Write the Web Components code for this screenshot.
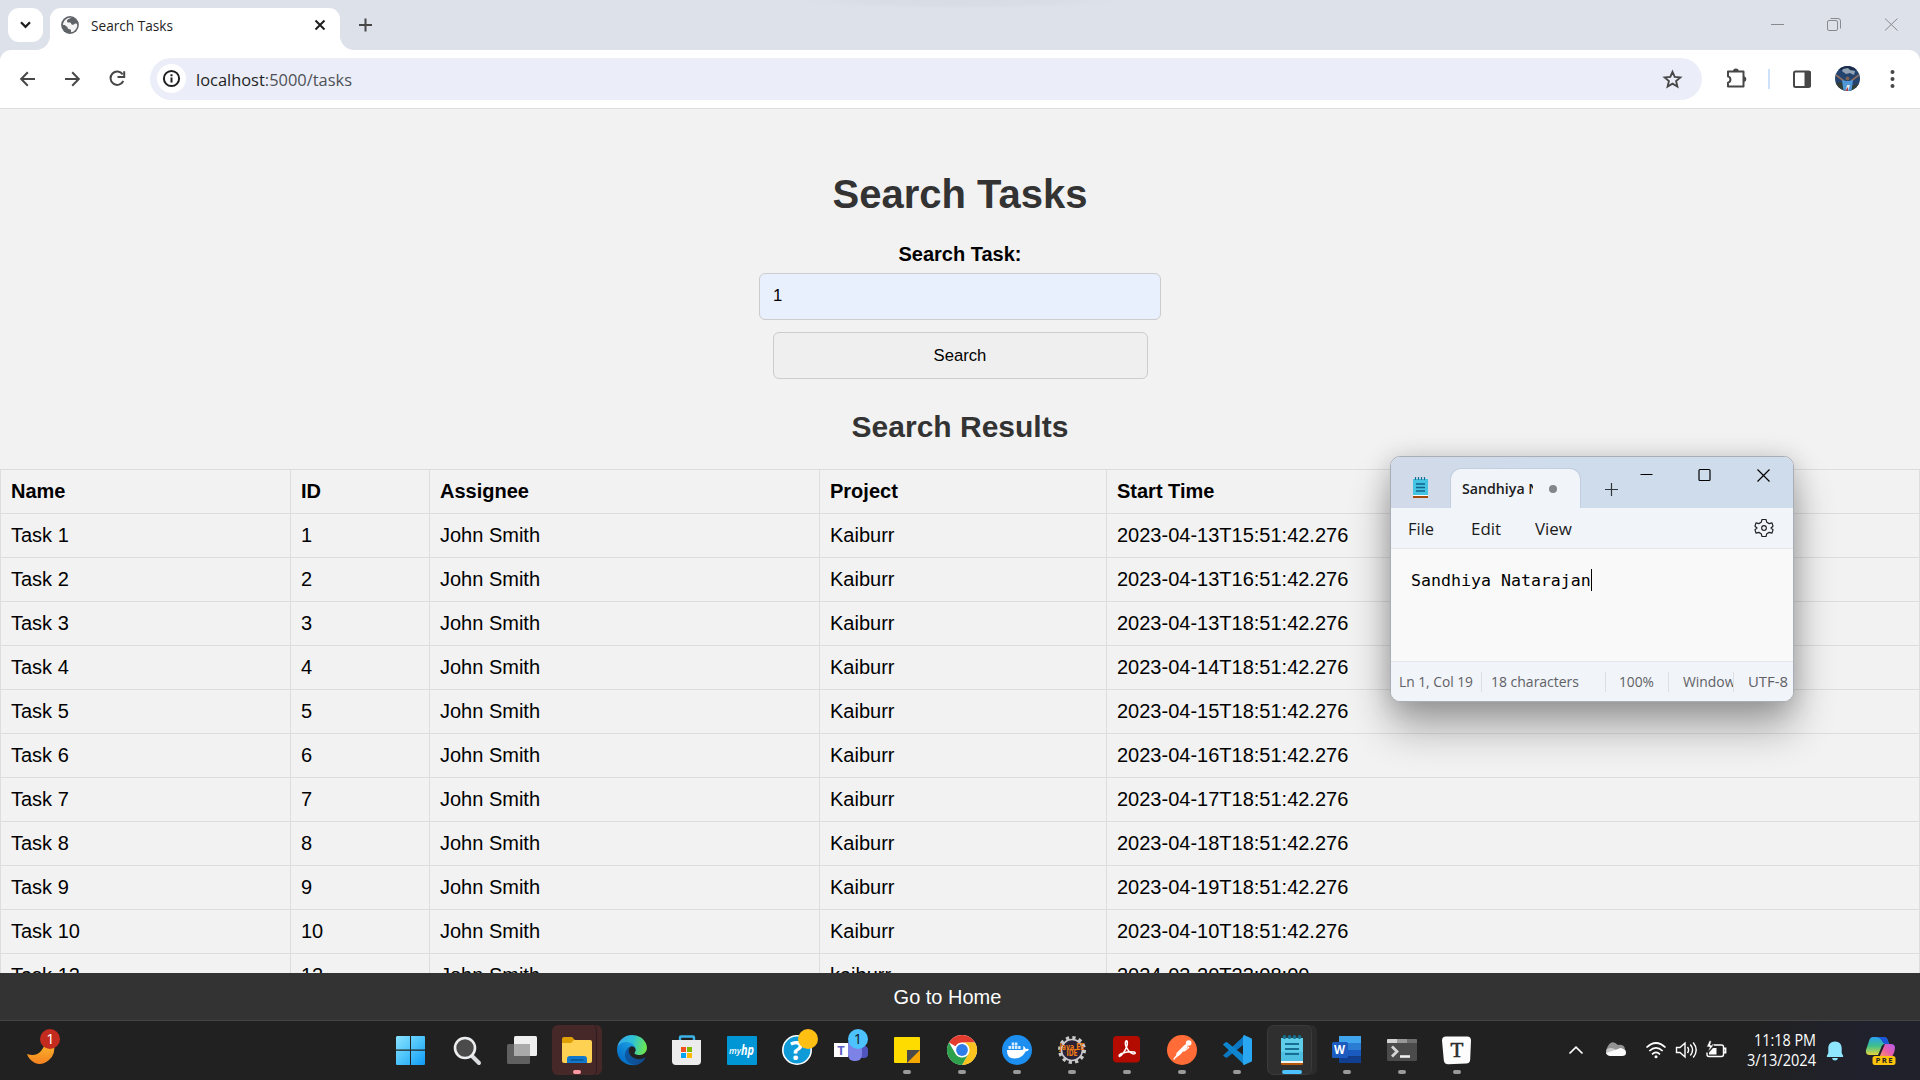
<!DOCTYPE html>
<html lang="en">
<head>
<meta charset="utf-8">
<title>Search Tasks</title>
<style>
html,body{margin:0;width:1920px;height:1080px;overflow:hidden}
body{font-family:"Liberation Sans",Arial,sans-serif;background:#f2f2f2}
</style>
</head>
<body>
<desk-top></desk-top>
<script>
const UI = '"Open Sans","Noto Sans",sans-serif';
function define(name, html, ready) {
  const t = document.createElement('template');
  t.innerHTML = html;
  customElements.define(name, class extends HTMLElement {
    connectedCallback() {
      if (this.shadowRoot) return;
      this.attachShadow({mode: 'open'}).append(t.content.cloneNode(true));
      if (ready) ready(this, this.shadowRoot);
    }
  });
}

/* text squeezed to a fixed advance width */
define('fit-text', `<style>:host{display:inline-block;white-space:nowrap;text-align:left}span{display:inline-block;transform-origin:0 50%}</style><span><slot></slot></span>`,
  (el, root) => {
    const s = root.querySelector('span'), w = +el.getAttribute('w');
    el.style.width = w + 'px';
    s.style.transform = 'scaleX(' + w / s.getBoundingClientRect().width + ')';
  });

define('tab-strip', `<style>
:host{display:flex;height:50px;background:radial-gradient(ellipse 160px 9px at 960px 0,#d7dbe3,#d9dde5 60%,#dde1e9);font-family:${UI};box-sizing:border-box;padding-left:8px}
.drop{margin-top:8px;width:35px;height:34px;border-radius:11px;background:#fff}
.tab{margin:8px 0 0 7px;width:290px;height:42px;background:#fff;border-radius:11px 11px 0 0;display:flex;align-items:center;position:relative;box-sizing:border-box;padding:0 11px 8px}
.tab:before,.tab:after{content:"";position:absolute;bottom:0;width:14px;height:14px}
.tab:before{left:-14px;background:radial-gradient(circle at 0 0,transparent 13.6px,#fff 14.2px)}
.tab:after{right:-14px;background:radial-gradient(circle at 100% 0,transparent 13.6px,#fff 14.2px)}
.t{margin-left:12px;font-size:15px;line-height:20px;color:#1f1f1f}
svg{display:block}
.new{margin:17px 0 0 18px}
.caps{margin-left:auto;margin-top:12px;display:flex;gap:31px;padding-right:16px}
</style>
<div class="drop"><svg width="35" height="34" fill="none" stroke="#1f1f1f" stroke-width="2.3"><path d="M13 14.3l4.5 4.5 4.500-4.500"/></svg></div>
<div class="tab">
<svg width="18" height="18" viewBox="0 0 18 18"><circle cx="9" cy="9" r="8.900" fill="#5f6368"/><path d="M10.500 1.500C8.500 3 6 3 6 5.300c0 1.500 1.800 1.200 3 1.200 1.300 0 .8 2 2.200 2.300 1.500.3 2-1.300 3.300-1.300 1.200 0 1.800.7 1.800 1.700C16 13 13 16 10 16.300c-.2-1.300.5-2-.5-2.800-1-.7-2.800-.2-3-2 0-1.500-2.500-1.300-2.500-2.500H2C2 5 5.500 1.500 10.500 1.500z" fill="#fff" opacity=".93"/></svg>
<fit-text class="t" w="82">Search Tasks</fit-text>
<svg style="margin-left:auto" width="18" height="18" viewBox="1 0 18 18" fill="none" stroke="#1f1f1f" stroke-width="2"><path d="M5.500 4.500l9 9M14.500 4.500l-9 9"/></svg>
</div>
<svg class="new" width="16" height="16" viewBox=".5 0 16 16" stroke="#474747" stroke-width="2"><path d="M8 1.500v13M1.500 8h13"/></svg>
<div class="caps">
<svg width="26" height="26" stroke="#888a8e" fill="none"><path d="M7 12.500h13"/></svg>
<svg width="26" height="26" stroke="#888a8e" fill="none"><rect x="6.500" y="8.500" width="10" height="10" rx="1.500"/><path d="M9.500 6.500h7.500a2.500 2.500 0 0 1 2.500 2.500v7.500"/></svg>
<svg width="26" height="26" stroke="#888a8e" fill="none"><path d="M7 6.500l12.500 12M19.500 6.500l-12.500 12"/></svg>
</div>`);

define('tool-bar', `<style>
:host{display:block;height:59px;background:#dde1e9;font-family:${UI}}
.bar{height:59px;box-sizing:border-box;border-bottom:1px solid #dcdde0;background:#fff;border-radius:11px 11px 0 0;display:flex;align-items:center;padding:0 0 1px 14px}
svg{display:block;flex:none}
.omni{margin-left:18px;width:1552px;height:42px;border-radius:21px;background:#ebeef8;display:flex;align-items:center;box-sizing:border-box;padding:0 15px 0 7px}
.omni i{width:29px;height:29px;border-radius:50%;background:#fff;margin-right:10px}
.u{font-size:17px;line-height:24px;color:#1f1f1f;padding-top:2px}
.u b{font-weight:400;color:#4f5156}
.sep{width:2px;height:20px;background:#d0e1fb;margin:0 18px}
.right{display:flex;align-items:center;margin-left:19px}
</style>
<div class="bar">
<svg width="28" height="28" fill="none" stroke="#474747" stroke-width="2"><path d="M21 14H7.500M13.800 7.300L7.200 14l6.600 6.700"/></svg>
<svg style="margin-left:16px" width="28" height="28" fill="none" stroke="#474747" stroke-width="2"><path d="M7 14h13.500M14.200 7.300l6.600 6.700-6.600 6.700"/></svg>
<svg style="margin-left:18px" width="28" height="28" fill="none" stroke="#474747" stroke-width="2"><path d="M18.700 9.300A6.700 6.700 0 1 0 19.300 16"/><path d="M13.500 12h6.700V6.200" /></svg>
<div class="omni"><i><svg width="29" height="29" fill="none" stroke="#1f1f1f" stroke-width="2"><circle cx="14.500" cy="14.500" r="7.600"/><path d="M14.500 13.500v5M14.500 10.300v2"/></svg></i>
<fit-text class="u" w="156">localhost<b>:5000/tasks</b></fit-text>
<svg style="margin-left:auto" width="28" height="28" viewBox=".5 0 28 28" fill="none" stroke="#474747" stroke-width="1.900"><path d="M14 6.800l2.200 5.100 5.600.5-4.200 3.700 1.300 5.500-4.900-2.900-4.900 2.900 1.300-5.500-4.200-3.700 5.600-.5z"/></svg></div>
<div class="right">
<svg width="30" height="28" viewBox="0 0 30 28"><path d="M7 6.500H22.500V21.500H7V17.600a3.200 3.200 0 0 0 0-6.200z" fill="none" stroke="#474747" stroke-width="2" stroke-linejoin="round"/><path d="M12 6.500a2.900 2.900 0 0 1 5.800 0zM23 11.200a2.900 2.900 0 0 1 0 5.700z" fill="#474747"/></svg>
<div class="sep" style="margin-left:17px"></div>
<svg width="28" height="28" viewBox=".5 0 28 28"><rect x="6.500" y="6.500" width="16" height="15.500" rx="1.500" fill="none" stroke="#474747" stroke-width="2"/><path d="M17 6h6v16h-6z" fill="#474747"/></svg>
<svg style="margin-left:19px" width="25" height="25" viewBox="0 0 25 25"><clipPath id="av"><circle cx="12.500" cy="12.500" r="12.500"/></clipPath><g clip-path="url(#av)"><path fill="#24446f" d="M0 0h25v25H0z"/><path fill="#1b2c4d" d="M0 0h25v4H0z"/><path fill="#93a3b6" d="M8 3l5-1 2 2 5 1-1 4-4-2-4 1-4-3z"/><path d="M0 17q6-2 12 1t13-1v9H0z" fill="#333e38"/><path d="M1 9l8 6M24 9l-8 6" stroke="#8d6d62" stroke-width="1.600"/><path d="M7 14l4 1h3l4-1-1.500 11H8.500z" fill="#4f98d8"/><circle cx="12.500" cy="12.500" r="1.900" fill="#7c6052"/><path d="M10.500 25l1.500-6h3l-2 6z" fill="#e5e5e5"/><path d="M10 25l3-4v4z" fill="#b43b3b"/></g></svg>
<svg style="margin-left:19px" width="26" height="28" fill="#474747"><circle cx="13.500" cy="7" r="2"/><circle cx="13.500" cy="14" r="2"/><circle cx="13.500" cy="21" r="2"/></svg>
</div></div>`);

define('search-form', `<style>
:host{display:flex;flex-direction:column;align-items:center;padding-top:62px;font-family:"Liberation Sans",Arial,sans-serif}
h1,h2{margin:0;color:#333;font-weight:700}
h1{font-size:40px;line-height:46px}
label{margin-top:26px;font-size:20px;line-height:23px;font-weight:700;color:#000}
input,button{box-sizing:border-box;height:47px;border:1px solid #ccc;border-radius:6px;font:16.670px "Liberation Sans",Arial,sans-serif;color:#000;margin:0;outline:0}
input{margin-top:7px;width:402px;background:#e8f0fe;padding:0 13px 2px}
button{margin-top:12px;width:375px;background:#efefef;padding:0}
h2{margin:31px 0 25px;font-size:30px;line-height:34px}
</style>
<h1>Search Tasks</h1><label for="q">Search Task:</label><input id="q" value="1"><button>Search</button><h2>Search Results</h2>`);

define('result-row', `<style>
:host{display:grid;grid-template-columns:290px 139px 390px 287px 814px;font:20px/23px "Liberation Sans",Arial,sans-serif;color:#000;border-top:1px solid #ddd;box-sizing:border-box;height:44px}
:host([head]){font-weight:700}
span{border-left:1px solid #ddd;padding:10px 10px 9px;box-sizing:border-box}
span:last-child{border-right:1px solid #ddd}
</style>`, (el, root) => {
  for (const v of el.getAttribute('cells').split('|')) {
    const s = document.createElement('span'); s.textContent = v; root.append(s);
  }
});

define('result-table', `<style>:host{display:block}</style>`, (el, root) => {
  const times = ['13T15','13T16','13T18','14T18','15T18','16T18','17T18','18T18','19T18','10T18'];
  const rows = ['Name|ID|Assignee|Project|Start Time',
    ...times.map((t, i) => `Task ${i+1}|${i+1}|John Smith|Kaiburr|2023-04-${t}:51:42.276`),
    'Task 12|12|John Smith|kaiburr|2024-03-20T23:08:00'];
  rows.forEach((r, i) => {
    const e = document.createElement('result-row');
    e.setAttribute('cells', r);
    if (!i) e.setAttribute('head', '');
    root.append(e);
  });
});

define('page-footer', `<style>:host{display:block;flex:none;height:47px;background:#333;color:#fff;font:20px/47px "Liberation Sans",Arial,sans-serif;text-align:center;padding:1px 25px 0 0;box-sizing:border-box}</style><slot></slot>`);

define('note-pad', `<style>
:host{position:absolute;left:1390px;top:456px;width:404px;height:246px;box-sizing:border-box;border:1px solid #a9aeb6;border-radius:10px;overflow:hidden;display:flex;flex-direction:column;background:#f9f9f9;box-shadow:0 26px 42px rgba(0,0,0,.32),0 2px 26px rgba(0,0,0,.17);font-family:${UI};color:#1b1b1b}
svg{display:block;flex:none}
.title{height:51px;background:linear-gradient(90deg,#d1dae9,#cfdceb 40%);display:flex}
.ico{margin:20px 0 0 21px}
.tab{margin:12px 0 0 22px;width:129px;height:39px;background:#f1f4f9;border-radius:10px 10px 0 0;box-shadow:0 0 0 1px #c3cee0;display:flex;align-items:center;box-sizing:border-box;padding:0 0 0 11px;clip-path:inset(-2px -2px 0 -2px)}
.tab div{width:71px;overflow:hidden;font-size:15px;font-weight:600;line-height:22px;white-space:nowrap;margin-top:-2px}
.dot{width:8px;height:8px;border-radius:50%;background:#85868a;margin-left:16px}
.caps{display:flex}
.menu{height:40px;background:#f1f4f9;border-bottom:1px solid #e3e5e9;display:flex;font-size:17px;line-height:42px;padding-left:17px}
.doc{flex:1;background:#f9f9f9;font:16.600px/24px "DejaVu Sans Mono",monospace;color:#000;padding:20px 0 0 20px;display:flex}
.doc i{width:1px;height:22px;background:#000}
.stat{height:39px;background:#f1f4f9;border-top:1px solid #e3e5e9;display:flex;align-items:center;font-size:14.500px;line-height:20px;color:#606165}
.stat b{width:1px;height:20px;background:#dcdfe4}
.cut{width:50px;overflow:hidden;margin-left:14px;height:20px}
</style>
<div class="title">
<svg class="ico" width="17" height="21"><path d="M1 2h15v16H1z" fill="#45c3e3"/><path d="M3.500 0v3M6.500 0v3M9.500 0v3M12.500 0v3" stroke="#176f92" stroke-width="1.200"/><path d="M4 7h9M4 10.500h9M4 14h9" stroke="#10638b" stroke-width="1.500"/><path d="M1 18h15v1H1z" fill="#fff"/><path d="M1 19h15v2H1z" fill="#a34a0c"/></svg>
<div class="tab"><div><fit-text w="135">Sandhiya Natarajan</fit-text></div><span class="dot"></span></div>
<svg style="margin-left:23px" width="16" height="51" stroke="#30343b" stroke-width="1.200"><path d="M8.500 26v13M2 32.500h13"/></svg>
<div class="caps">
<svg width="58" height="51" stroke="#000" stroke-width="1.200" fill="none"><path d="M21.500 17.500h12"/></svg>
<svg width="58" height="51" stroke="#000" stroke-width="1.200" fill="none"><rect x="22" y="12.500" width="11" height="11" rx="1"/></svg>
<svg width="58" height="51" stroke="#000" stroke-width="1.200" fill="none"><path d="M22.500 12.500l12 12M34.500 12.500l-12 12"/></svg></div>
</div>
<div class="menu"><fit-text w="26">File</fit-text><fit-text w="30" style="margin-left:37px">Edit</fit-text><fit-text w="37" style="margin-left:34px">View</fit-text>
<svg style="margin-left:182px" width="20" height="40" viewBox="-10 -20 20 40" fill="none" stroke="#222" stroke-width="1.200" stroke-linejoin="round"><path d="M-2-8.500H2L2.800-5.700 5.200-4.400 8-5.200 9-1.800 7 0 9 1.800 8 5.200 5.200 4.400 2.800 5.700 2 8.500H-2L-2.800 5.700-5.200 4.400-8 5.200-9 1.800-7 0-9-1.800-8-5.200-5.200-4.400-2.800-5.700z"/><circle r="2.300"/></svg></div>
<div class="doc"><span>Sandhiya Natarajan</span><i></i></div>
<div class="stat"><fit-text w="74" style="margin-left:8px">Ln 1, Col 19</fit-text><b style="margin-left:8px"></b><fit-text w="88" style="margin-left:9px">18 characters</fit-text><b style="margin-left:26px"></b><fit-text w="35" style="margin-left:13px">100%</fit-text><b style="margin-left:14px"></b><div class="cut"><fit-text w="59">Windows</fit-text></div><b></b><fit-text w="40" style="margin-left:14px">UTF-8</fit-text></div>`);

define('task-icon', `<style>:host{display:block;width:55px;height:59px}svg{display:block;overflow:visible}</style><svg width="55" height="59" viewBox="-28 -29 55 59"></svg>`,
  (el, root) => {
    const s = root.querySelector('svg');
    const plate = {red: '<rect x="-25" y="-25" width="50" height="50" rx="6" fill="#472829"/><path d="M17-25q2.500 1 2.500 5v40q0 4-2.500 5" fill="none" stroke="#2c1c1d"/>',
      dark: '<rect x="-18" y="-25" width="43" height="50" rx="6" fill="#2b2b2b"/><rect x="-24.500" y="-24.500" width="44" height="49" rx="6" fill="#2f2f2f" stroke="#3b3b3b"/>'}[el.getAttribute('plate')] || '';
    const run = {gray: '<rect x="-4" y="20" width="8" height="4" rx="2" fill="#9a9a9a"/>', pink: '<rect x="-4" y="20" width="8" height="4" rx="2" fill="#ff99a4"/>',
      blue: '<rect x="-10" y="20" width="20" height="4" rx="2" fill="#4cc2ff"/>'}[el.getAttribute('run')] || '';
    s.innerHTML = plate + ICONS[el.getAttribute('name')] + run;
  });

const ICONS = {
start: `<defs><linearGradient id="g" gradientUnits="userSpaceOnUse" x1="-16" y1="-14" x2="13" y2="15"><stop offset="0" stop-color="#8be3ff"/><stop offset=".5" stop-color="#4cc3fb"/><stop offset="1" stop-color="#109bf5"/></linearGradient></defs><path fill="url(#g)" d="M-15-14h13v13.500h-14v-12.500zM-1-14h13q1 0 1 1V-.5H-1zM-16 .8h14V15h-13q-1 0-1-1zM-1 .8h14V14q0 1-1 1H-1z"/>`,
search: `<path d="M5 6l7 7" stroke="#d9dbdf" stroke-width="4" stroke-linecap="round"/><circle cx="-2" cy="-2" r="10" fill="#4b4b4b" stroke="#eceef0" stroke-width="2.600"/>`,
view: `<rect x="-15" y="-6" width="23" height="20" rx="1.500" fill="#606060"/><rect x="-8" y="-14" width="23" height="20" rx="1.500" fill="#f0f0f0"/><path d="M-8-6H8V6H-8z" fill="#aaa"/>`,
folder: `<path d="M-15-11q0-2 2-2h8l3 3h13v7h-26z" fill="#dfa006"/><path d="M-15-7h9l3-3h16q2 0 2 2v19q0 2-2 2h-26q-2 0-2-2z" fill="#ffd153"/><path d="M-10 13V9q0-3 3-3H7q3 0 3 3v4z" fill="#1278cb"/><path d="M-6.500 10h13" stroke="#064a83" stroke-width="1.200"/>`,
edge: `<defs><linearGradient id="a" x1="63" y1="178" x2="241" y2="178" gradientUnits="userSpaceOnUse"><stop stop-color="#0c59a4"/><stop offset="1" stop-color="#114a8b"/></linearGradient><linearGradient id="b" x1="157" y1="100" x2="46" y2="221" gradientUnits="userSpaceOnUse"><stop stop-color="#1b9de2"/><stop offset="1" stop-color="#0570c9"/></linearGradient><linearGradient id="c" x1="10" y1="50" x2="245" y2="110" gradientUnits="userSpaceOnUse"><stop stop-color="#35a8ea"/><stop offset=".5" stop-color="#2fc2d6"/><stop offset="1" stop-color="#6be750"/></linearGradient></defs><g transform="translate(-15 -15) scale(.117)"><path fill="url(#a)" d="M235.700 195.500a93.700 93.700 0 0 1-10.500 4.700 101.900 101.900 0 0 1-35.900 6.400c-47.300 0-88.500-32.500-88.500-74.300A31.500 31.500 0 0 1 117.100 105c-42.800 1.800-53.800 46.400-53.800 72.500 0 73.900 68.100 81.400 82.800 81.400 7.900 0 19.800-2.300 27-4.600l1.300-.4a128.300 128.300 0 0 0 66.600-52.800 4 4 0 0 0-5.300-5.600z"/><path fill="url(#b)" d="M105.700 241.400a79.200 79.200 0 0 1-22.700-21.300 80.700 80.700 0 0 1 29.500-120c3.100-1.500 8.500-4.100 15.500-4a32.400 32.400 0 0 1 25.700 13 31.900 31.900 0 0 1 6.300 18.700c0-.2 24.500-79.600-80-79.600-43.900 0-80 41.600-80 78.200a130 130 0 0 0 12.100 56 128 128 0 0 0 156.400 67.100 75.600 75.600 0 0 1-62.800-8z"/><path fill="url(#c)" d="M152.300 148.900c-.8 1-3.300 2.500-3.300 5.600 0 2.600 1.700 5.100 4.700 7.200 14.400 10 41.500 8.700 41.600 8.700a59.600 59.600 0 0 0 30.300-8.300 61.400 61.400 0 0 0 30.400-52.900c.3-22.400-8-37.300-11.300-43.900C223.500 23.800 177.700 0 128 0A128 128 0 0 0 0 126.200c.5-36.500 36.800-66 80-66 3.500 0 23.500.3 42 10 16.300 8.600 24.900 18.900 30.900 29.200 6.200 10.700 7.300 24.200 7.300 29.500s-2.700 13.400-7.900 20z"/></g>`,
store: `<path d="M-7-8v-4.500q0-1 1-1H6q1 0 1 1V-8" fill="none" stroke="#3cb4ea" stroke-width="2.400"/><path d="M-15-10h29v21q0 4-4 4h-21q-4 0-4-4z" fill="#ececec"/><path d="M-6-3h5v5h-5z" fill="#f25022"/><path d="M0-3h5v5H0z" fill="#7fba00"/><path d="M-6 3h5v5h-5z" fill="#00a4ef"/><path d="M0 3h5v5H0z" fill="#ffb900"/>`,
hp: `<rect x="-15" y="-14" width="30" height="29" rx="1" fill="#0096d6"/><text x="-13" y="3.500" font-family="Open Sans" font-size="9.500" font-weight="600" font-style="italic" fill="#fff" textLength="12" lengthAdjust="spacingAndGlyphs">my</text><text x="-1" y="4.500" font-family="Open Sans" font-size="14" font-weight="700" font-style="italic" fill="#fff" textLength="13" lengthAdjust="spacingAndGlyphs">hp</text>`,
help: `<circle r="14.200" fill="#0f9ad8" stroke="#fff" stroke-width="1.600"/><text x="-.5" y="10" text-anchor="middle" font-family="Open Sans" font-size="27" font-weight="700" fill="#fff">?</text><circle cx="11" cy="-11" r="10" fill="#ffbf13"/>`,
teams: `<rect x="4" y="-4" width="12" height="12" rx="4" fill="#4f55bd"/><rect x="-4" y="-12" width="14" height="23" rx="6" fill="#7c82e6"/><rect x="-18" y="-7" width="14" height="14" fill="#fff"/><text x="-11" y="4.500" text-anchor="middle" font-family="Open Sans" font-size="13" font-weight="700" fill="#5b5fc7">T</text><circle cx="6" cy="-11" r="10" fill="#4cc2ff"/><text x="6" y="-6" text-anchor="middle" font-family="Open Sans" font-size="14.500" fill="#111">1</text>`,
sticky: `<rect x="-13" y="-13" width="26" height="26" rx="1" fill="#ffdc00"/><path d="M0 13V0h13v13z" fill="#f6a700"/><path d="M0 13V0h13z" fill="#4a4a4a"/>`,
chrome: `<circle r="15" fill="#fff"/><path d="M-13-7.500A15 15 0 0 1 13-7.500H0A7.500 7.500 0 0 0-6.500-3.700z" fill="#e33b2e"/><path d="M13-7.500A15 15 0 0 1 0 15L6.500 3.700A7.500 7.500 0 0 0 0-7.500z" fill="#fcc31e"/><path d="M0 15A15 15 0 0 1-13-7.500L-6.500 3.700A7.500 7.500 0 0 0 6.500 3.700z" fill="#2da04c"/><circle r="7.300" fill="#fff"/><circle r="5.900" fill="#2f7de9"/>`,
docker: `<circle r="15" fill="#1d8ff0"/><path d="M-10 0H5.500q1.500-1 .5-4 2 .5 2.800 3 2-.6 3.200.3-1 2.200-3.500 2.200Q5.500 8.500-2.500 8.500-10.500 8.500-10 0z" fill="#fff"/><path d="M-8.500-4h2.500v3h-2.500zM-5.300-4h2.500v3h-2.500zM-2.100-4h2.500v3h-2.500zM1.100-4h2.500v3H1.100zM-5.300-7.500h2.500v3h-2.500zM-2.100-7.500h2.500v3h-2.500z" fill="#d8ecfd"/>`,
java: `<circle r="12" fill="#282433" stroke="#c9c9c9" stroke-width="4" stroke-dasharray="3.140 3.140"/><circle r="10.500" fill="#292135" stroke="#c9c9c9" stroke-width="1.600"/><text x="0" y="-.3" text-anchor="middle" font-family="DejaVu Sans" font-size="8" font-weight="700" fill="#f07d16" textLength="25" lengthAdjust="spacingAndGlyphs">Java EE</text><text x="0" y="6.200" text-anchor="middle" font-family="DejaVu Sans" font-size="8" font-weight="700" fill="#f07d16" textLength="11" lengthAdjust="spacingAndGlyphs">IDE</text>`,
adobe: `<rect x="-14" y="-14" width="27" height="26.500" rx="4" fill="#b30b00"/><path d="M-7.500 6.500C-10 4 0 1 7 2c3 1 0 3-3 1C0 0-3-6-1-9c2-1 1.500 4 .5 6-1 3-4.500 9-7 9.500z" fill="none" stroke="#fff" stroke-width="1.500"/>`,
postman: `<circle r="15" fill="#ff6c37"/><g stroke="#fff" fill="none" stroke-linecap="round"><path d="M4-4l-8 8" stroke-width="3.500"/><path d="M-4 4l-4 5M-1 3l-5 4" stroke-width="1.300"/></g><circle cx="6.700" cy="-7" r="2.800" fill="#fff"/><path d="M7-3Q3 1 1 1" stroke="#fff" fill="none" stroke-width="1.200"/>`,
code: `<path d="M-14-5.500l2.500-2q1-.6 2 .2L8 7v8z" fill="#0f85cf"/><path d="M-14 5.500l2.500 2q1 .6 2-.2L8-6.500V-15z" fill="#0d78c2"/><path d="M-14-5.500l2.500-2q1-.6 2 .2L8 6.500 7.500 15z" fill="#0f85cf"/><path d="M7-15l7.200 3.200q.8.500.8 1.300v21q0 .8-.8 1.300L7 15q-1-.3-1-1V-13q0-1.500 1-2z" fill="#29a7f3"/>`,
note: `<path d="M-11-12h22v23h-22z" fill="#5fcde8"/><path d="M-11 2h22v9h-22z" fill="#4ebfe0"/><g fill="#166e8c"><circle cx="-7.500" cy="-13" r="1.900"/><circle cx="-2.500" cy="-13" r="1.900"/><circle cx="2.500" cy="-13" r="1.900"/><circle cx="7.500" cy="-13" r="1.900"/></g><path d="M-7-6H7M-7-1H7M-7 4H7" stroke="#166e94" stroke-width="1.900"/><path d="M-11 11h22v2h-22z" fill="#f2f2f2"/><path d="M-11 13h22v1q0 1-1 1h-20q-1 0-1-1z" fill="#b4590c"/>`,
word: `<path d="M-8-14h22v7H-8z" fill="#41a5ee"/><path d="M-8-7h22V0H-8z" fill="#2b7cd3"/><path d="M-8 0h22v6.500H-8z" fill="#185abd"/><path d="M-8 6.500h22V13H-8z" fill="#103f91"/><rect x="-15" y="-8" width="16" height="16" rx="1.500" fill="#1c5cc0"/><text x="-7.500" y="4" text-anchor="middle" font-family="Open Sans" font-size="11.500" font-weight="700" fill="#fff" textLength="11" lengthAdjust="spacingAndGlyphs">W</text>`,
term: `<rect x="-15" y="-11" width="30" height="22" rx="1.500" fill="#4b4b4b"/><path d="M-15-7v-3q0-1 1-1h9v4z" fill="#d2d2d2"/><path d="M-5-11H5v4H-5z" fill="#989898"/><path d="M5-11h9q1 0 1 1v3H5z" fill="#6e6e6e"/><path d="M-10-3.500l5 5-5 5" fill="none" stroke="#d5d5d5" stroke-width="2.800"/><path d="M-2 6.500h10" stroke="#eee" stroke-width="2.600"/>`,
typora: `<path d="M-11-13.500H10q4 0 4 4l-.8 19q-.2 4-4 4l-18 .8q-4 0-4.400-4L-15-9.500q0-4 4-4z" fill="#fcfcfc"/><text x="0" y="6.500" text-anchor="middle" font-family="Liberation Serif" font-size="21" fill="#2c2c2c" stroke="#2c2c2c" stroke-width=".6">T</text>`
};

define('task-bar', `<style>
:host{display:flex;flex:none;height:60px;box-sizing:border-box;border-top:1px solid #454545;background:linear-gradient(90deg,#212121 0,#212121 91%,#20212c 97%,#20212a);color:#fff;font-family:${UI}}
svg{display:block;flex:none}
.left{width:384px}
.apps{display:flex;width:1176px}
.tray{display:flex}
.clock{width:84px;display:flex;flex-direction:column;align-items:flex-end;font-size:15.500px;line-height:20px;padding-top:9px}
</style>
<div class="left"><svg width="70" height="59" viewBox="0 1021 70 59"><defs><linearGradient id="m" x1="0" y1="0" x2="0" y2="1"><stop stop-color="#f8b62d"/><stop offset="1" stop-color="#f58220"/></linearGradient></defs><path d="M27 1054q9 3 14-3t2-8h11q2 11-5 17t-14 3q-6-3-8-9z" fill="url(#m)"/><circle cx="50" cy="1039" r="10" fill="#c42b1f"/><text x="50.300" y="1044.300" text-anchor="middle" font-family="Open Sans" font-size="14.500" fill="#fff">1</text></svg></div>
<div class="apps"></div>
<div class="tray">
<svg width="32" height="59" fill="none" stroke="#fff" stroke-width="1.700"><path d="M9.500 32.500l6.500-6.300 6.500 6.300"/></svg>
<svg width="48" height="59"><path d="M16 25q4-7 10-1 6-1 7 4l-14 4-5-3z" fill="#929292"/><path d="M19 35q-5 0-5-4 0-4 5-4 3 0 5 2z" fill="#c8c8c8"/><path d="M18 35q-3-1-4-3l12-4q3-2 5 0 3 0 3 4 0 3-4 3z" fill="#fafafa"/></svg>
<svg width="32" height="59" fill="none" stroke="#fff" stroke-width="1.700"><path d="M6.500 26.500q9.500-9 19 0M9.300 30q6.700-6.200 13.400 0M12 33.300q4-3.800 8 0"/><circle cx="16" cy="35.700" r="1.500" fill="#fff" stroke="none"/></svg>
<svg width="28" height="59" fill="none" stroke="#fff" stroke-width="1.400"><path d="M4.500 26.500h3.500l5-4.500v14l-5-4.500h-3.500zM15.500 26q2.200 3 0 6M18.300 23.500q4.500 5.500 0 11M21.200 21.500q6 7.500 0 15"/></svg>
<svg width="32" height="59" fill="none" stroke="#fff" stroke-width="1.400"><path d="M12 24h9.500q2 0 2 2v7.500q0 2-2 2H9q-2 0-2-2v-2"/><path d="M24 27.500h1.500v4H24" stroke-width="1.800"/><path d="M9 33.500v-2l4-4.500h3.500v6.500z" fill="#fff" stroke="none"/><path d="M9.500 19.500L6.500 26h3L8 31l6-7h-3.500L11.500 20z" fill="#fff" stroke="#212121" stroke-width=".7"/></svg>
<div class="clock"><fit-text w="62">11:18 PM</fit-text><fit-text w="69">3/13/2024</fit-text></div>
<svg width="38" height="59" fill="#8fe6ff"><path d="M19 20.500c4.500 0 6.700 3 6.700 7v4.500l1.500 3q.3 1-.8 1H11.600q-1.100 0-.8-1l1.500-3v-4.500c0-4 2.200-7 6.700-7zM16 37h6q-.5 2.500-3 2.500T16 37z"/></svg>
<svg width="66" height="59" viewBox="-27 -29 66 59"><defs><linearGradient id="p" x1="0" y1="0" x2="0" y2="1"><stop stop-color="#2aa0ef"/><stop offset=".5" stop-color="#3fc08a"/><stop offset="1" stop-color="#e8d63c"/></linearGradient><linearGradient id="q" x1="1" y1="0" x2="0" y2="1"><stop stop-color="#b05af0"/><stop offset=".5" stop-color="#ea5fa6"/><stop offset="1" stop-color="#ffa05a"/></linearGradient></defs><path d="M-8-13H3q3 0 4 4l1 3H4q-3 0-4 4L-3 5H-11q-5 0-4-5l3-9q1-4 4-4z" fill="url(#p)"/><path d="M-6-13H3q3 0 4 4l1 3H4Q2-6 1-9-1-13-6-13z" fill="#1b56d8"/><path d="M4-6h6q4 0 4 4 0 4-3 9L-2 8z" fill="url(#q)"/><rect x="-8.500" y="6" width="23" height="9" rx="2.500" fill="#ffc40c"/><text x="3" y="13.300" text-anchor="middle" font-family="Open Sans" font-weight="700" font-size="7.800" fill="#222" textLength="17">PRE</text></svg>
</div>`, (el, root) => {
  const apps = 'start search view folder:pink:red edge store hp help teams sticky:gray chrome:gray docker:gray java:gray adobe:gray postman:gray code:gray note:blue:dark word:gray term:gray typora:gray';
  for (const a of apps.split(' ')) {
    const [n, run, plate] = a.split(':'), e = document.createElement('task-icon');
    e.setAttribute('name', n);
    if (run) e.setAttribute('run', run);
    if (plate) e.setAttribute('plate', plate);
    root.querySelector('.apps').append(e);
  }
});

define('desk-top', `<style>
:host{display:flex;flex-direction:column;width:1920px;height:1080px;overflow:hidden;position:relative}
main{flex:1;min-height:0;overflow:hidden;background:#f2f2f2}
</style>
<tab-strip></tab-strip><tool-bar></tool-bar>
<main><search-form></search-form><result-table></result-table></main>
<page-footer>Go to Home</page-footer>
<task-bar></task-bar>
<note-pad></note-pad>`);
</script>
</body>
</html>
